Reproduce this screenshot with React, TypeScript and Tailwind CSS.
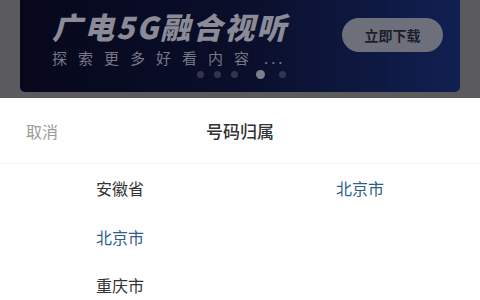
import React from "react";

const font = { fontFamily: '"Noto Sans CJK SC", "Noto Sans", sans-serif' };

const provinces = [
  { name: "安徽省", active: false },
  { name: "北京市", active: true },
  { name: "重庆市", active: false },
];

export default function App() {
  return (
    <div className="w-[480px] h-[300px] overflow-hidden bg-white flex flex-col" style={font}>
      {/* Dimmed page behind the sheet */}
      <div className="h-[98px] bg-[#5b5b5d] px-[20px] pb-[6px] flex flex-col shrink-0">
        <div className="flex-1 rounded-b-[5px] bg-gradient-to-r from-[#07081c] via-[#0a0e2a] to-[#112052] flex items-start pl-[32px] pr-[17px]">
          <div className="flex flex-col pt-[9px]">
            <div className="text-[30px] leading-[34px] font-black italic text-[#8a8b96] tracking-[2px]">
              广电5G融合视听
            </div>
            <div className="text-[15px] leading-[18px] mt-[6px] text-[#777884] tracking-[11px] whitespace-nowrap">
              探索更多好看内容<span className="tracking-[3px] ml-[4px]">...</span>
            </div>
            <div className="flex items-center mt-[3px] ml-[145px]">
              <span className="w-[7px] h-[7px] rounded-full bg-[#33364a]" />
              <span className="w-[7px] h-[7px] rounded-full bg-[#33364a] ml-[10px]" />
              <span className="w-[7px] h-[7px] rounded-full bg-[#33364a] ml-[10px]" />
              <span className="w-[9px] h-[9px] rounded-full bg-[#7d7f8a] ml-[18px]" />
              <span className="w-[7px] h-[7px] rounded-full bg-[#33364a] ml-[14px]" />
            </div>
          </div>
          <div className="ml-auto mt-[18px] w-[101px] h-[34px] rounded-full bg-[#6d707b] flex items-center justify-center text-[14px] font-bold text-[#1a1d2c]">
            立即下载
          </div>
        </div>
      </div>

      {/* Sheet header */}
      <div className="h-[66px] shrink-0 flex items-center relative border-b border-[#f4f4f4]">
        <span className="pl-[26px] text-[16px] text-[#9a9a9a]">取消</span>
        <span className="absolute left-0 right-0 text-center text-[17px] font-medium text-[#333333] pointer-events-none">
          号码归属
        </span>
      </div>

      {/* Picker columns */}
      <div className="grid grid-cols-2">
        <div className="flex flex-col">
          {provinces.map((p) => (
            <div
              key={p.name}
              className={`h-[48.5px] flex items-center justify-center text-[16px] ${
                p.active ? "text-[#2f5e88]" : "text-[#333333]"
              }`}
            >
              {p.name}
            </div>
          ))}
        </div>
        <div className="flex flex-col">
          <div className="h-[48.5px] flex items-center justify-center text-[16px] text-[#2f5e88]">北京市</div>
        </div>
      </div>
    </div>
  );
}
